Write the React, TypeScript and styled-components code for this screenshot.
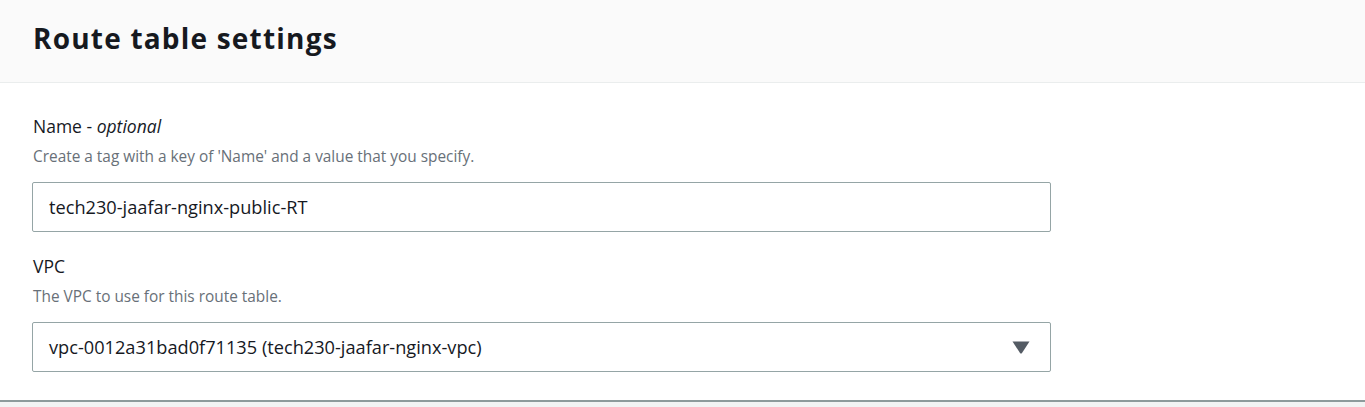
import React from "react";
import styled, { createGlobalStyle } from "styled-components";

const Global = createGlobalStyle`
  html, body { margin: 0; padding: 0; background: #f2f3f3; }
  body { font-family: "Open Sans", "Noto Sans", sans-serif; color: #16191f; }
  * { box-sizing: border-box; }
`;

const Panel = styled.section`
  width: 1365px;
  height: 402px;
  background: #ffffff;
  border-bottom: 2px solid #8d9a9b;
  display: flex;
  flex-direction: column;
`;

const Header = styled.header`
  height: 83px;
  background: #fafafa;
  border-bottom: 1px solid #eaeded;
  display: flex;
  align-items: center;
  padding: 0 33px 6px;
`;

const Title = styled.h2`
  margin: 0;
  font-size: 28px;
  font-weight: 700;
  color: #16191f;
  letter-spacing: 1.2px;
`;

const Body = styled.div`
  display: flex;
  flex-direction: column;
  padding: 30px 32px 0;
`;

const Field = styled.div<{ $gap?: number }>`
  display: flex;
  flex-direction: column;
  margin-bottom: ${(p) => p.$gap ?? 0}px;
`;

const Label = styled.label`
  font-size: 17.5px;
  line-height: 26px;
  color: #16191f;
  padding-left: 1px;
  em { font-style: italic; }
`;

const Description = styled.div`
  font-size: 15.4px;
  line-height: 22px;
  color: #687078;
  padding-left: 1px;
  margin-top: 7px;
  margin-bottom: 14px;
`;

const Box = styled.div`
  width: 1019px;
  height: 50px;
  border: 1px solid #95a5a6;
  border-radius: 2px;
  background: #fff;
  display: flex;
  align-items: center;
  justify-content: space-between;
  padding: 0 20px 0 16px;
  font-size: 18.2px;
  color: #16191f;
`;

const Caret = styled.svg`
  width: 18px;
  height: 13px;
  flex: none;
`;

export default function App() {
  return (
    <>
      <Global />
      <Panel>
        <Header>
          <Title>Route table settings</Title>
        </Header>
        <Body>
          <Field $gap={21}>
            <Label>
              Name - <em>optional</em>
            </Label>
            <Description>Create a tag with a key of 'Name' and a value that you specify.</Description>
            <Box>tech230-jaafar-nginx-public-RT</Box>
          </Field>
          <Field>
            <Label>VPC</Label>
            <Description>The VPC to use for this route table.</Description>
            <Box>
              <span>vpc-0012a31bad0f71135 (tech230-jaafar-nginx-vpc)</span>
              <Caret viewBox="0 0 18 13">
                <path d="M0.5 0.5 H17.5 L10 12 Q9 13.2 8 12 Z" fill="#545b64" />
              </Caret>
            </Box>
          </Field>
        </Body>
      </Panel>
    </>
  );
}
